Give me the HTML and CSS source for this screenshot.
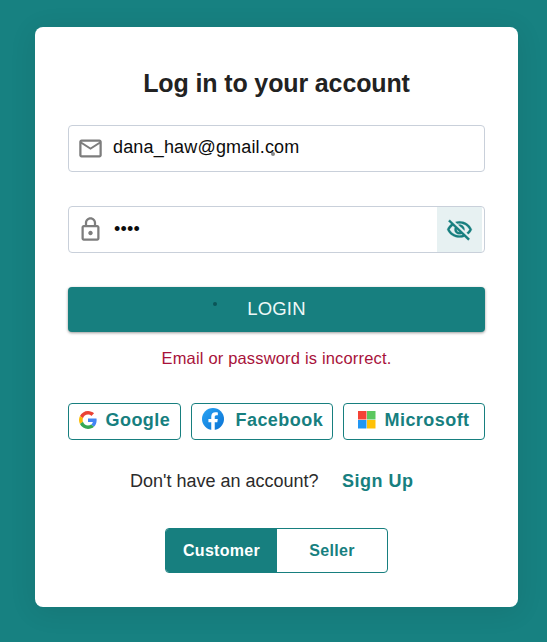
FILE: index.html
```html
<!DOCTYPE html>
<html lang="en">
<head>
<meta charset="utf-8">
<title>Log in</title>
<link rel="stylesheet" href="styles.css">
</head>
<body>
<main class="card">
  <h1 class="title">Log in to your account</h1>
  <div class="field field-email">
    <svg class="icon" width="27" height="27" viewBox="0 0 24 24" fill="#7d7d7d"><path d="M22 6c0-1.100-.9-2-2-2H4c-1.100 0-2 .9-2 2v12c0 1.100.9 2 2 2h16c1.100 0 2-.9 2-2V6zm-2 0l-8 5-8-5h16zm0 12H4V8l8 5 8-5v10z"/></svg>
    <span class="value">dana_haw@gmail.com</span>
    <i class="speck speck-email"></i>
  </div>
  <div class="field field-password">
    <svg class="icon" width="27" height="27" viewBox="0 0 24 24" fill="#7d7d7d"><path d="M18 8h-1V6c0-2.760-2.240-5-5-5S7 3.240 7 6v2H6c-1.100 0-2 .9-2 2v10c0 1.100.9 2 2 2h12c1.100 0 2-.9 2-2V10c0-1.100-.9-2-2-2zM9 6c0-1.660 1.340-3 3-3s3 1.340 3 3v2H9V6zm9 14H6V10h12v10zm-6-3c1.100 0 2-.9 2-2s-.9-2-2-2-2 .9-2 2 .9 2 2 2z"/></svg>
    <span class="value dots">••••</span>
    <span class="toggle">
      <svg width="27" height="26" viewBox="0 0 24 24" preserveAspectRatio="none" fill="#177f7f" stroke="#177f7f" stroke-width=".2"><path d="M12 6c3.790 0 7.170 2.130 8.820 5.500-.59 1.220-1.420 2.270-2.410 3.120l1.410 1.410c1.390-1.230 2.490-2.770 3.180-4.530C21.270 7.110 17 4 12 4c-1.270 0-2.490.2-3.640.57l1.650 1.650C10.660 6.090 11.320 6 12 6zm-1.070 1.140L13 9.210c.57.25 1.030.71 1.280 1.280l2.070 2.070c.08-.34.14-.7.14-1.070C16.500 9.010 14.480 7 12 7c-.37 0-.72.05-1.070.14zM2.010 3.870l2.680 2.680C3.060 7.830 1.770 9.530 1 11.500 2.730 15.890 7 19 12 19c1.520 0 2.980-.29 4.320-.82l3.420 3.420 1.410-1.410L3.420 2.450 2.010 3.870zm7.500 7.500l2.610 2.610c-.04.01-.08.02-.12.02-1.380 0-2.500-1.120-2.500-2.500 0-.05.01-.08.01-.13zm-3.400-3.400l1.750 1.750c-.23.55-.36 1.150-.36 1.780 0 2.480 2.020 4.500 4.500 4.500.63 0 1.230-.13 1.770-.36l.98.98c-.88.24-1.800.38-2.750.38-3.790 0-7.170-2.130-8.820-5.500.7-1.430 1.720-2.610 2.930-3.530z"/></svg>
    </span>
  </div>
  <div class="login">LOGIN<i class="speck speck-login"></i></div>
  <p class="error">Email or password is incorrect.</p>
  <div class="providers">
    <div class="provider google">
      <svg width="18" height="18" viewBox="0 0 48 48"><path fill="#EA4335" d="M24 9.500c3.540 0 6.710 1.220 9.210 3.600l6.850-6.850C35.900 2.380 30.470 0 24 0 14.620 0 6.510 5.380 2.560 13.220l7.980 6.190C12.430 13.720 17.740 9.500 24 9.500z"/><path fill="#4285F4" d="M46.980 24.550c0-1.570-.15-3.090-.38-4.550H24v9.020h12.940c-.58 2.960-2.260 5.480-4.780 7.180l7.730 6c4.510-4.180 7.090-10.360 7.090-17.650z"/><path fill="#FBBC05" d="M10.530 28.590c-.48-1.450-.76-2.990-.76-4.590s.27-3.140.76-4.590l-7.980-6.190C.92 16.460 0 20.120 0 24c0 3.880.92 7.540 2.560 10.780l7.970-6.190z"/><path fill="#34A853" d="M24 48c6.480 0 11.930-2.130 15.890-5.810l-7.730-6c-2.150 1.450-4.920 2.300-8.160 2.300-6.260 0-11.570-4.220-13.470-9.910l-7.980 6.190C6.510 42.620 14.620 48 24 48z"/></svg>
      <span>Google</span>
    </div>
    <div class="provider facebook">
      <svg width="22" height="22" viewBox="0 0 24 24"><defs><linearGradient id="fb" x1="0" y1="0" x2="1" y2="1"><stop offset="0" stop-color="#2aa4f4"/><stop offset="1" stop-color="#0a72d4"/></linearGradient></defs><circle cx="12" cy="12" r="12" fill="url(#fb)"/><path fill="#fff" d="M16.700 15.500l.5-3.500h-3.300V9.700c0-.9.500-1.900 1.900-1.900h1.500V4.900s-1.400-.2-2.700-.2c-2.700 0-4.500 1.700-4.500 4.700V12H7v3.500h3.100v8.400a12 12 0 0 0 3.800 0v-8.400h2.800z"/></svg>
      <span>Facebook</span>
    </div>
    <div class="provider microsoft">
      <svg width="18" height="18" viewBox="0 0 18 18"><path fill="#f44336" d="M0 0h8.500v8.500H0z"/><path fill="#5bc75f" d="M9 0h8.500v8.500H9z"/><path fill="#2196f3" d="M0 9h8.500v8.500H0z"/><path fill="#ffc107" d="M9 9h8.500v8.500H9z"/></svg>
      <span>Microsoft</span>
    </div>
  </div>
  <div class="signup"><span>Don't have an account?</span><b>Sign Up</b></div>
  <div class="roles"><span class="role active">Customer</span><span class="role">Seller</span></div>
</main>
</body>
</html>
```
FILE: styles.css
```css
* { box-sizing: border-box; }
body {
  margin: 0;
  height: 642px;
  padding: 27px 29px 35px 35px;
  background: #178181;
  font-family: "Liberation Sans", Arial, sans-serif;
  overflow: hidden;
}
svg { display: block; flex: none; }
.card {
  height: 580px;
  padding: 40px 33px 34px;
  background: #fff;
  border-radius: 8px;
  box-shadow: 0 4px 28px rgba(0, 0, 0, .09);
  display: flex;
  flex-direction: column;
}
.title {
  margin: 0 0 26px;
  font-size: 25px;
  line-height: 32px;
  letter-spacing: -.13px;
  color: #222;
  text-align: center;
}
.field {
  position: relative;
  height: 47px;
  flex: none;
  border: 1px solid #c9d0da;
  border-radius: 4px;
  display: flex;
  align-items: center;
  padding-left: 8px;
}
.field-password { margin-top: 34px; }
.icon { margin-top: -1px; }
.value {
  margin: -2px 0 0 9px;
  font-size: 18px;
  letter-spacing: .17px;
  color: #0c0c0c;
}
.dots { margin-left: 10px; margin-top: -1px; }
.toggle {
  margin: 0 2px 0 auto;
  width: 45px;
  height: 45px;
  background: #e7f1f2;
  display: flex;
  align-items: center;
  justify-content: center;
}
.speck {
  position: absolute;
  width: 4px;
  height: 4px;
  border-radius: 50%;
}
.speck-email { left: 202px; top: 26px; background: #888; }
.speck-login { left: 145px; top: 15px; background: #0b5558; }
.login {
  position: relative;
  flex: none;
  height: 45px;
  margin-top: 34px;
  background: #177f7f;
  border-radius: 4px;
  box-shadow: 0 1px 3px rgba(0, 0, 0, .4);
  color: #eef8f8;
  font-size: 18.500px;
  line-height: 44px;
  letter-spacing: .2px;
  text-align: center;
}
.error {
  margin: 16px 0 0;
  color: #a8123a;
  font-size: 16.500px;
  line-height: 20px;
  letter-spacing: .17px;
  text-align: center;
}
.providers {
  margin-top: 35px;
  display: grid;
  grid-template-columns: 113px 142px 142px;
  gap: 10px;
}
.provider {
  height: 37px;
  border: 1px solid #177f7f;
  border-radius: 4px;
  display: flex;
  align-items: center;
  padding-bottom: 3px;
  color: #177f7f;
  font-size: 18px;
  font-weight: bold;
  letter-spacing: .45px;
}
.google { padding-left: 10px; gap: 8.500px; }
.facebook { padding: 0 0 5px 10px; gap: 11.500px; }
.facebook span { padding-top: 2px; }
.microsoft { padding-left: 13.500px; gap: 9px; }
.signup {
  margin: 30px 0 0 62px;
  display: flex;
  gap: 23.500px;
  font-size: 18px;
  line-height: 22px;
  color: #2b2b2b;
}
.signup b { color: #177f7f; letter-spacing: .5px; }
.roles {
  margin: 36px 0 0 97px;
  width: 223px;
  height: 45px;
  border: 1px solid #177f7f;
  border-radius: 4px;
  display: grid;
  grid-template-columns: 111px 110px;
  overflow: hidden;
}
.role {
  font-size: 16px;
  font-weight: bold;
  line-height: 43px;
  letter-spacing: .3px;
  text-align: center;
  color: #177f7f;
}
.active { background: #177f7f; color: #fff; }
```
